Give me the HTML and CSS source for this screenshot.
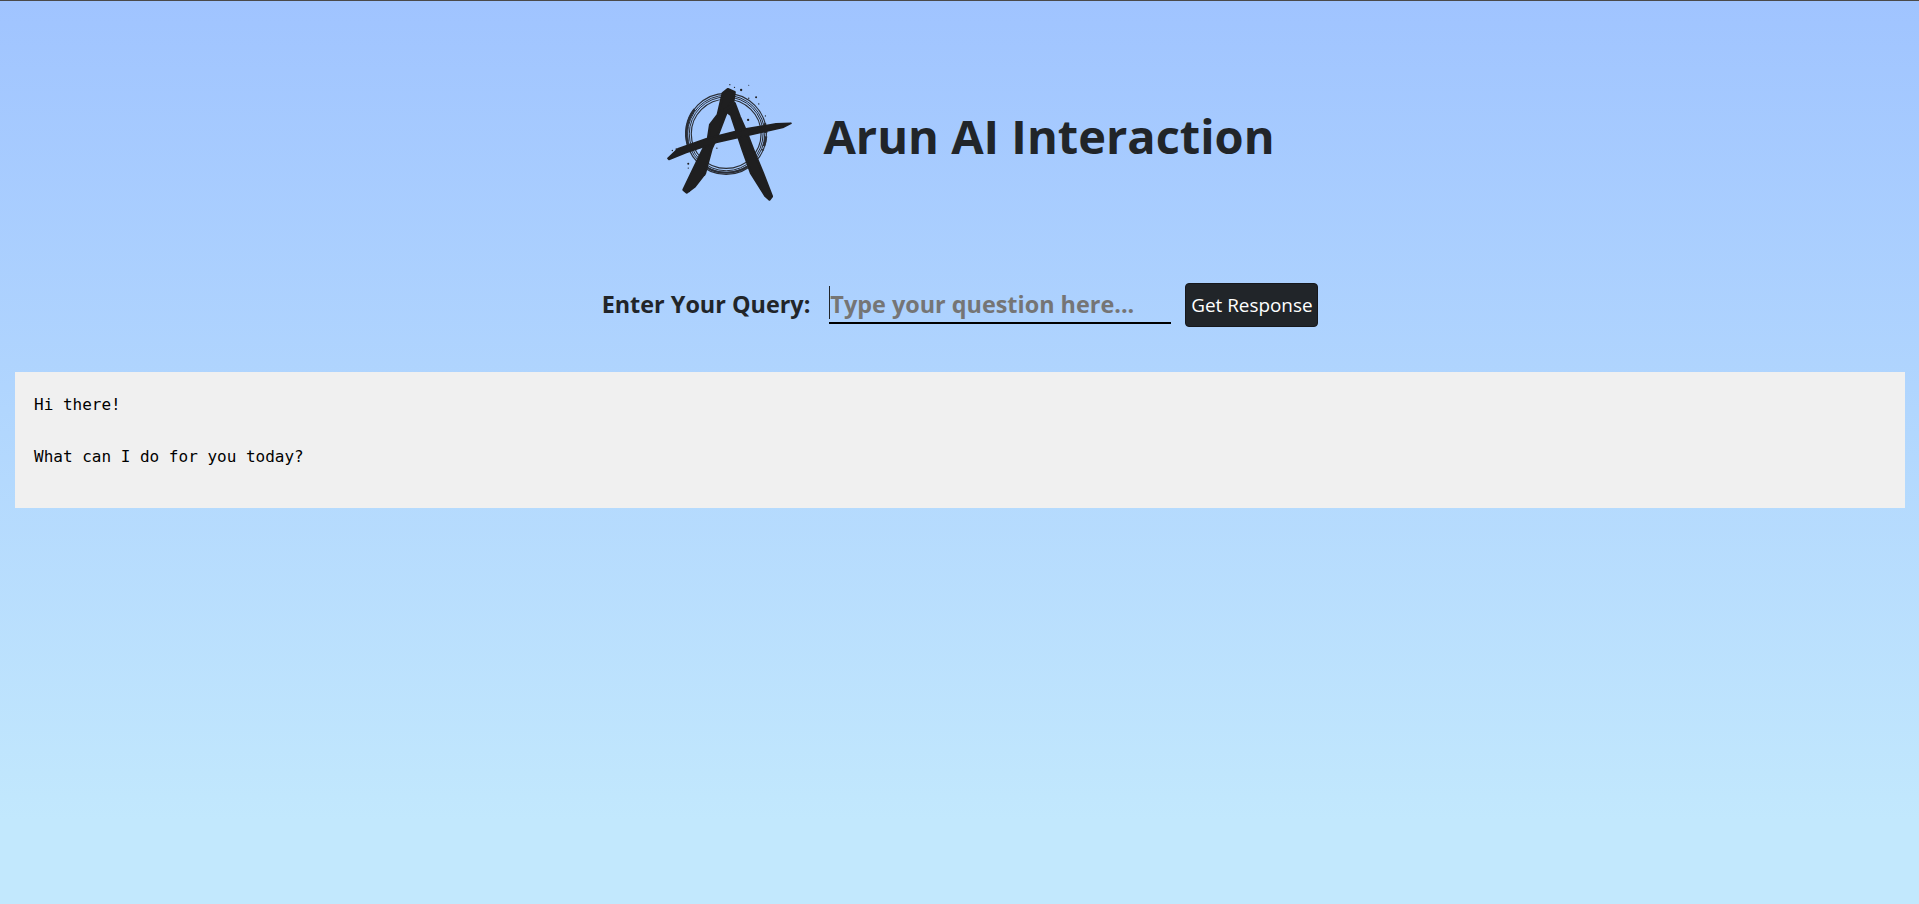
FILE: index.html
```html
<!DOCTYPE html>
<html lang="en">
<head>
<meta charset="utf-8">
<title>Arun AI Interaction</title>
<link rel="stylesheet" href="styles.css">
</head>
<body>
<header class="brand">
  <svg class="logo" viewBox="70 60 400 370" aria-hidden="true">
    <g fill="none" stroke="#2a2e36">
      <ellipse cx="260" cy="222" rx="121" ry="122" stroke-width="3.5"/>
      <ellipse cx="260" cy="222" rx="116" ry="116" stroke-width="3"/>
      <ellipse cx="260" cy="222" rx="111" ry="111" stroke-width="3"/>
      <ellipse cx="260" cy="222" rx="105" ry="104" stroke-width="3.5"/>
      <path d="M145 255 A119 119 0 0 1 165 148" stroke-width="8"/>
      <path d="M376 190 A117 117 0 0 1 368 272" stroke-width="8" stroke-dasharray="30 10"/>
      <path d="M200 322 A116 116 0 0 0 325 320" stroke-width="6"/>
    </g>
    <g fill="#1f1f20" stroke="#1f1f20" stroke-linejoin="round">
      <path stroke-width="8" d="M250 100 L265 88 L285 97 L281 125 L270 135 L255 172 L236 222 L216 266 L196 340 L165 380 L141 398 L132 390 L180 290 L205 240 L212 195 L235 165 Z"/>
      <path stroke-width="8" d="M255 150 L272 140 L285 130 L300 170 L320 215 L345 280 L370 340 L397 410 L390 419 L378 408 L335 340 L310 270 L290 210 L275 165 Z"/>
      <path stroke-width="5" d="M85 296 L115 267 L200 237 L320 207 L410 192 L455 190 L430 203 L340 223 L230 248 L140 278 L88 299 Z"/>
    </g>
    <g fill="#1f1f20">
      <circle cx="271" cy="74" r="2"/><circle cx="285" cy="82" r="2"/><circle cx="305" cy="90" r="3.5"/>
      <circle cx="328" cy="76" r="1.5"/><circle cx="350" cy="112" r="3"/><circle cx="328" cy="115" r="2"/>
      <circle cx="358" cy="132" r="2"/><circle cx="326" cy="180" r="3.5"/><circle cx="378" cy="168" r="2"/>
      <circle cx="232" cy="265" r="2"/><circle cx="146" cy="312" r="3"/>
      <circle cx="146" cy="325" r="2"/><circle cx="194" cy="345" r="3.5"/><circle cx="149" cy="395" r="2.5"/>
      <circle cx="98" cy="272" r="2"/><circle cx="110" cy="268" r="2.5"/>
    </g>
  </svg>
  <h1 class="title">Arun AI Interaction</h1>
</header>
<form class="query">
  <label class="query-label" for="q">Enter Your Query:</label>
  <span class="query-field">
    <input class="query-input" id="q" type="text" placeholder="Type your question here...">
  </span>
  <button class="query-btn" type="button">Get Response</button>
</form>
<pre class="response">Hi there!

What can I do for you today?
</pre>
</body>
</html>
```
FILE: styles.css
```css
* { box-sizing: border-box; }
html, body { height: 100%; }
body {
  margin: 0;
  padding: 1px 14px 0 15px;
  background: linear-gradient(#a0c4ff 0, #c2e8fd 820px);
  color: #212529;
  font-family: "Open Sans", "Noto Sans", sans-serif;
  box-shadow: inset 0 1px 0 #4a4a4a;
}
.brand {
  display: flex;
  justify-content: center;
  align-items: center;
  gap: 27px;
  height: 210px;
  padding-top: 70px;
  padding-left: 18px;
}
.logo { width: 133px; height: 123px; flex: none; }
.title {
  margin: 0 0 10px;
  font-size: 47px;
  font-weight: 700;
  line-height: 1.2;
  white-space: nowrap;
}
.query {
  display: flex;
  justify-content: center;
  align-items: center;
  gap: 13px;
  margin-top: 72px;
  height: 44px;
}
.query-label { font-size: 23.4px; font-weight: 700; margin: 0 6px 2px 0; }
.query-field { position: relative; display: block; height: 38px; margin-right: 1px; }
.query-field::before {
  content: "";
  position: absolute;
  left: 0;
  top: 0;
  width: 1px;
  height: 33px;
  background: #212529;
}
.query-input {
  display: block;
  width: 342px;
  height: 38px;
  padding: 0 0 0 1px;
  border: 0;
  border-bottom: 2px solid #000;
  background: transparent;
  font: 700 23.4px "Open Sans", "Noto Sans", sans-serif;
  outline: none;
}
.query-input::placeholder { color: #757575; opacity: 1; }
.query-btn {
  width: 133px;
  height: 44px;
  padding: 0;
  border: 1px solid #16181c;
  border-radius: 4px;
  background: #212529;
  color: #fff;
  font: 400 18.9px "Open Sans", "Noto Sans", sans-serif;
}
.response {
  margin: 45px 0 0;
  padding: 20px 19px;
  height: 136px;
  background: #f0f0f0;
  color: #000;
  font: 16px/26px "DejaVu Sans Mono", monospace;
}
```
